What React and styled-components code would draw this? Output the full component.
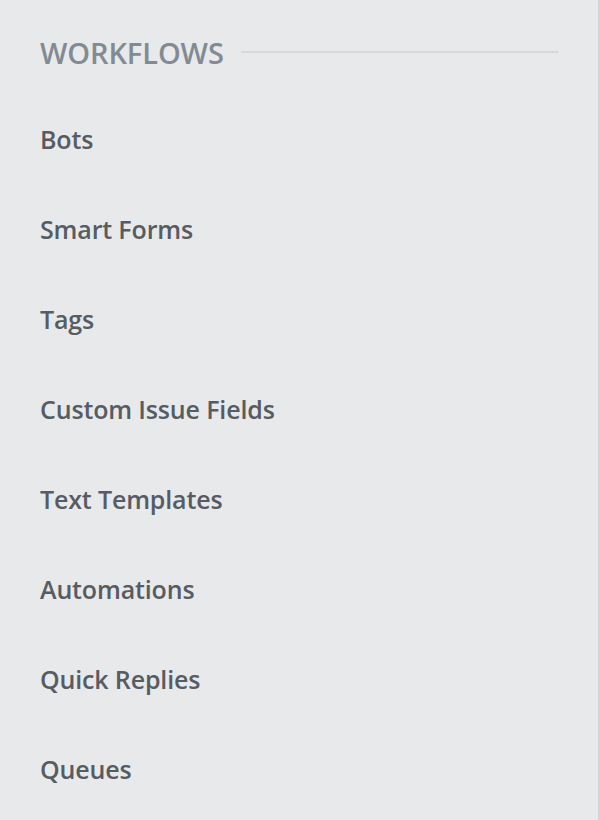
import React from "react";
import styled, { createGlobalStyle } from "styled-components";

const GlobalStyle = createGlobalStyle`
  html, body {
    margin: 0;
    padding: 0;
    background: #e8e9eb;
  }
`;

const items = [
  "Bots",
  "Smart Forms",
  "Tags",
  "Custom Issue Fields",
  "Text Templates",
  "Automations",
  "Quick Replies",
  "Queues",
];

export default function App() {
  return (
    <>
      <GlobalStyle />
      <Sidebar>
        <SectionHeader>
          <SectionTitle>Workflows</SectionTitle>
          <Rule />
        </SectionHeader>
        <NavList>
          {items.map((label) => (
            <NavItem key={label}>
              <NavLink href="#">{label}</NavLink>
            </NavItem>
          ))}
        </NavList>
      </Sidebar>
    </>
  );
}

const Sidebar = styled.nav`
  box-sizing: border-box;
  width: 600px;
  height: 820px;
  padding: 34px 40px 0 40px;
  background: #e8e9eb;
  border-right: 2px solid #d2d3d5;
  font-family: "Open Sans", Lato, sans-serif;
  overflow: hidden;
`;

const SectionHeader = styled.div`
  display: flex;
  align-items: center;
  gap: 17px;
  height: 36px;
`;

const SectionTitle = styled.h2`
  margin: 0;
  font-size: 29px;
  font-weight: 600;
  text-transform: uppercase;
  color: #838b92;
  line-height: 1;
  letter-spacing: -0.1px;
`;

const Rule = styled.div`
  flex: 1;
  height: 2px;
  background: #d6d8da;
`;

const NavList = styled.ul`
  list-style: none;
  margin: 0;
  padding: 24px 0 0;
`;

const NavItem = styled.li`
  display: flex;
  align-items: center;
  height: 90px;
`;

const NavLink = styled.a`
  font-size: 25px;
  font-weight: 600;
  color: #565c62;
  text-decoration: none;
  line-height: 1;
  letter-spacing: -0.15px;
`;
